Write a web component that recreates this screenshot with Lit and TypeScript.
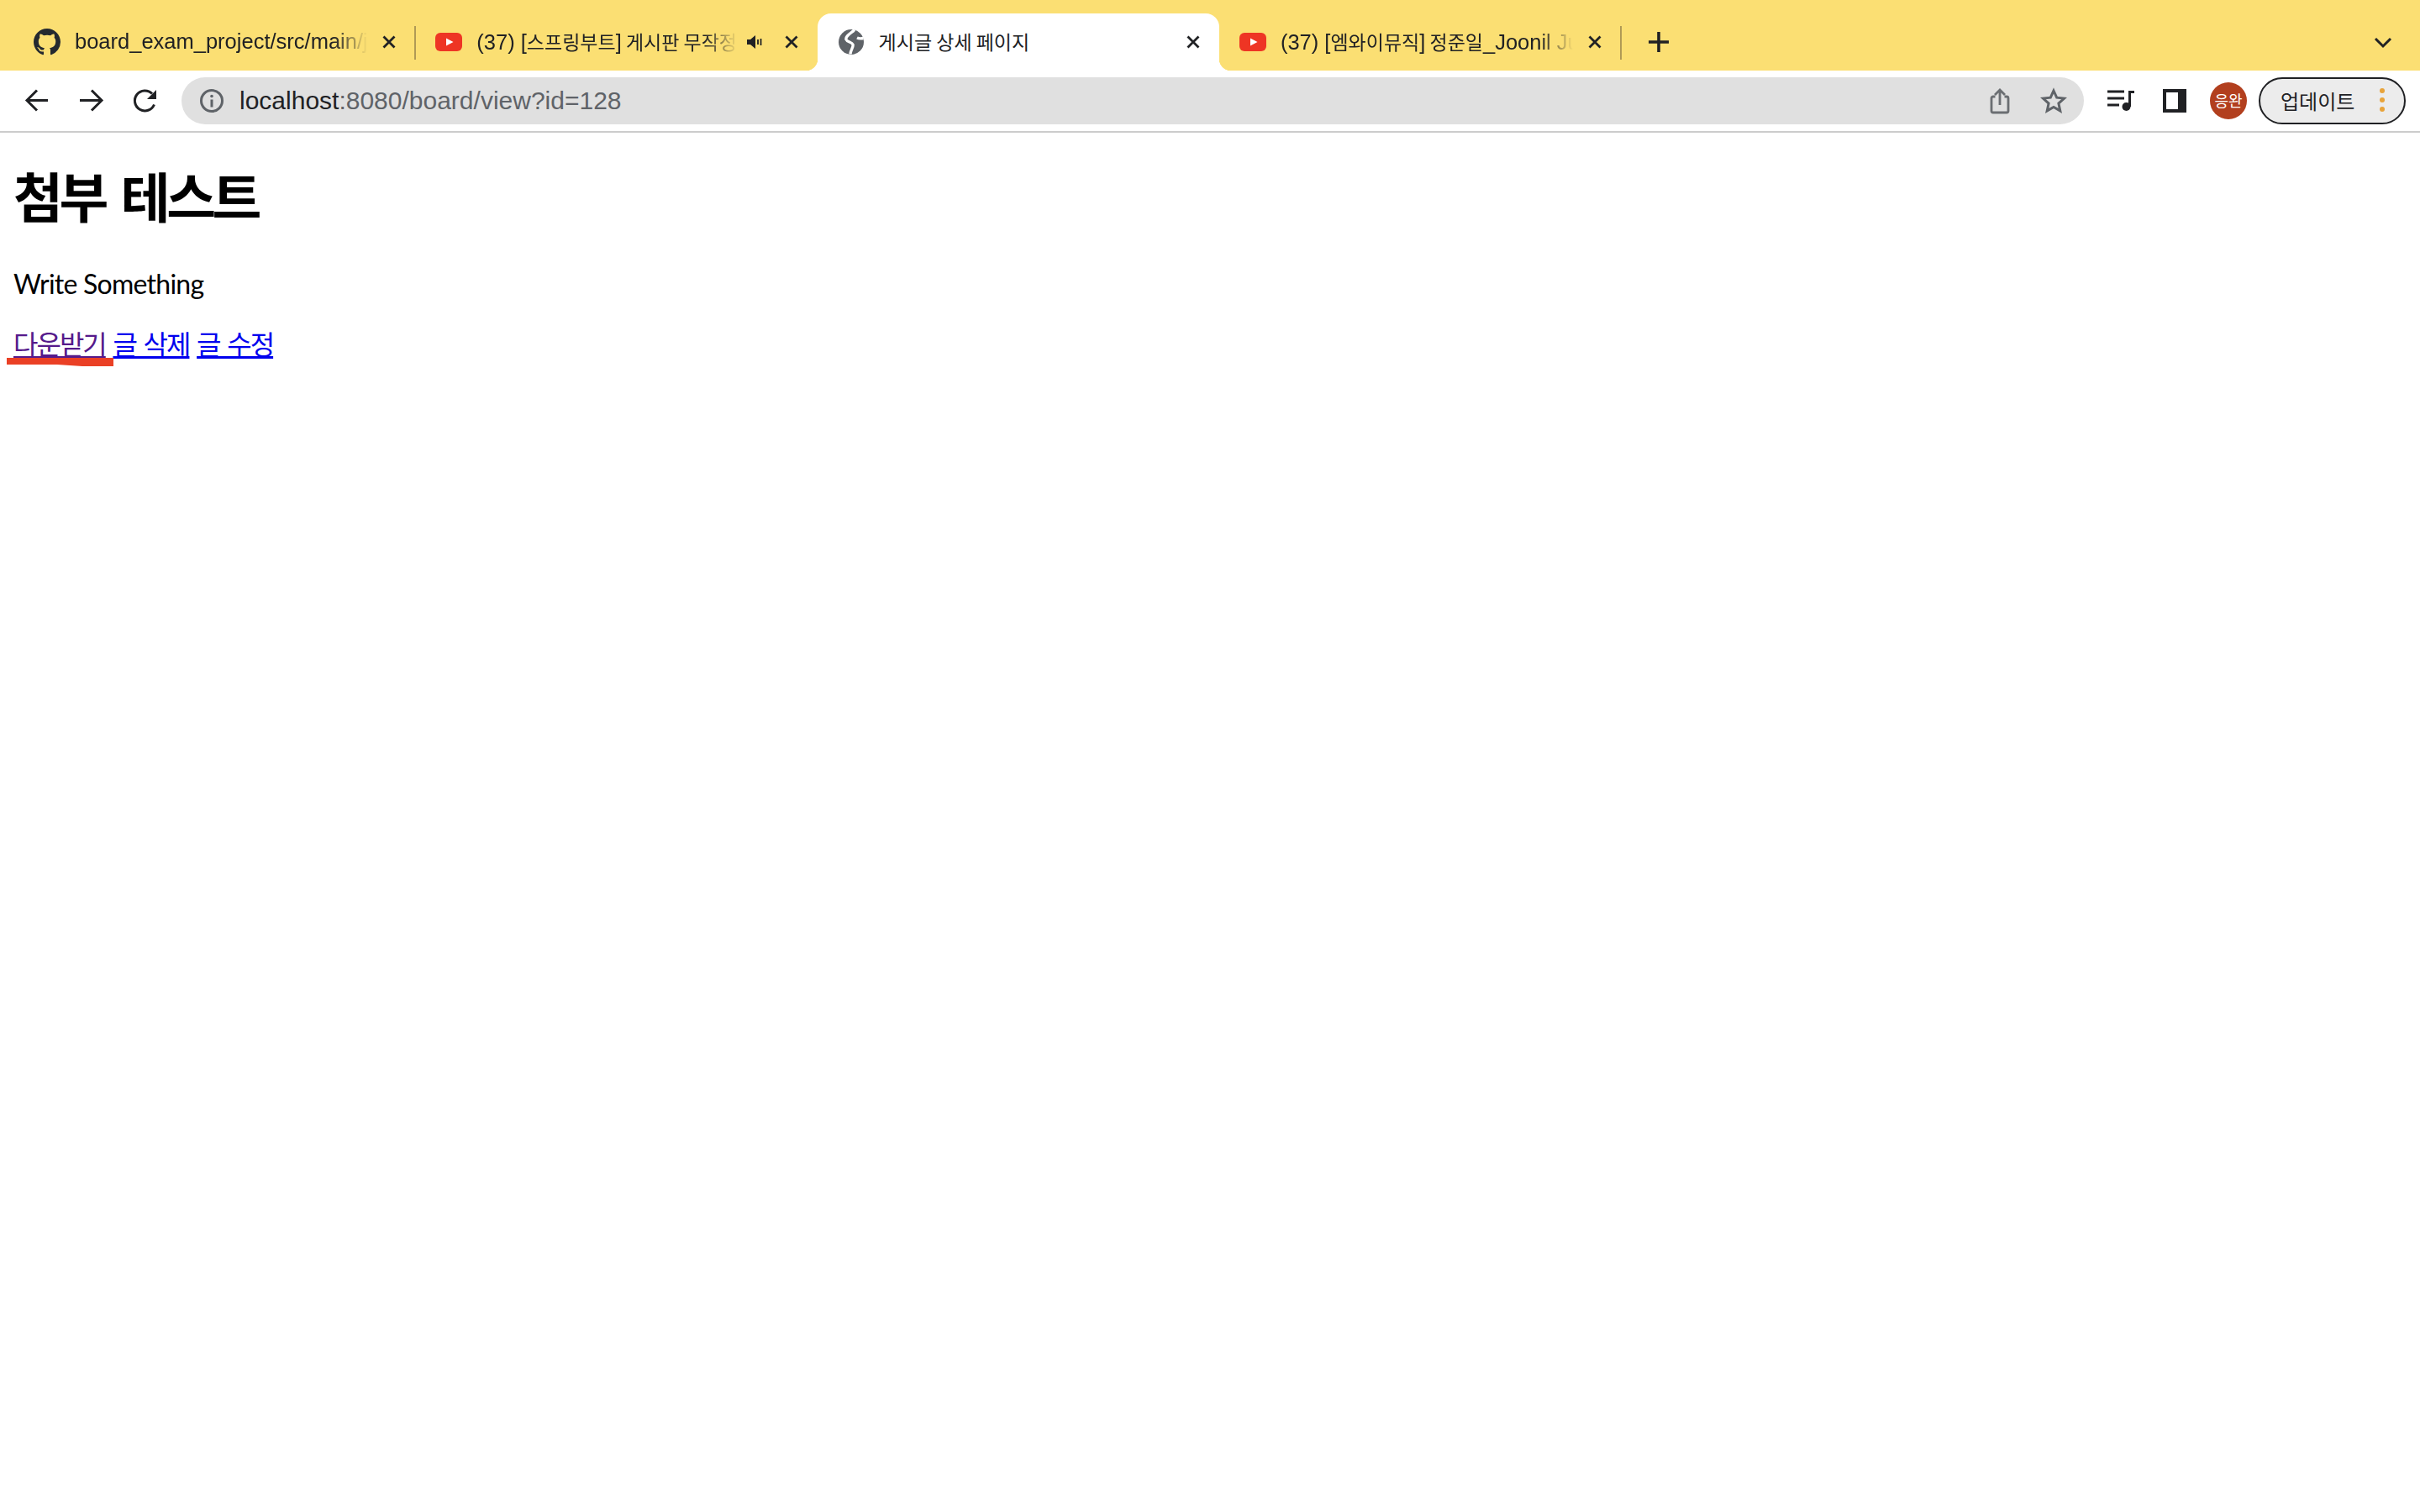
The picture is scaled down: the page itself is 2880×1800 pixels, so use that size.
import { LitElement, html, css } from "lit";
import { customElement } from "lit/decorators.js";

const ghIcon = html`<svg class="fav" viewBox="0 0 16 16"><path fill="#24292f" d="M8 0C3.58 0 0 3.58 0 8c0 3.54 2.29 6.53 5.47 7.59.4.07.55-.17.55-.38 0-.19-.01-.82-.01-1.49-2.01.37-2.53-.49-2.69-.94-.09-.23-.48-.94-.82-1.13-.28-.15-.68-.52-.01-.53.63-.01 1.08.58 1.23.82.72 1.21 1.87.87 2.33.66.07-.52.28-.87.51-1.07-1.78-.2-3.64-.89-3.64-3.95 0-.87.31-1.59.82-2.15-.08-.2-.36-1.02.08-2.12 0 0 .67-.21 2.2.82.64-.18 1.32-.27 2-.27s1.36.09 2 .27c1.53-1.04 2.2-.82 2.2-.82.44 1.1.16 1.92.08 2.12.51.56.82 1.27.82 2.15 0 3.07-1.87 3.75-3.65 3.95.29.25.54.73.54 1.48 0 1.07-.01 1.93-.01 2.2 0 .21.15.46.55.38A8.01 8.01 0 0 0 16 8c0-4.42-3.58-8-8-8z"/></svg>`;
const ytIcon = html`<svg class="fav" viewBox="0 0 32 32"><rect x="0" y="5" width="32" height="22" rx="6" fill="#ee3524"/><path d="M13 11.500 21.500 16 13 20.500z" fill="#fff"/></svg>`;
const globeIcon = html`<svg class="fav" viewBox="0 0 32 32"><circle cx="16" cy="16" r="15" fill="#5f6368"/><path d="M20 1.500C15 6 9 9 10 13c1 3 7 3 8 6 1 3-3 7-3 11.500M23 11c2 1 5 1 7.500 .5" stroke="#fff" stroke-width="3.400" fill="none"/></svg>`;
const closeIcon = html`<svg class="close" viewBox="0 0 32 32"><path d="M9.500 9.500l13 13M22.500 9.500l-13 13" stroke="#202124" stroke-width="2.800" fill="none"/></svg>`;
const speaker = html`<svg class="speaker" viewBox="0 0 24 24"><path fill="#202124" d="M3 9h4l6-5v16l-6-5H3z"/><path d="M16 9v6M19.500 8v8" stroke="#202124" stroke-width="1.800" fill="none"/></svg>`;

@customElement("app-tab")
class AppTab extends LitElement {
  static properties = {
    label: {},
    kind: {},
    active: { type: Boolean },
    sound: { type: Boolean },
    sep: { type: Boolean },
  };
  label = "";
  kind = "";
  active = false;
  sound = false;
  sep = false;
  static styles = css`
    :host { display: block; width: 478.3px; height: 68px; flex: none; position: relative; }
    .tab { height: 68px; display: flex; align-items: center; padding: 0 15px 0 24px; box-sizing: border-box; position: relative; }
    .tab.active { background: #fff; border-radius: 16px 16px 0 0; }
    .tab.active::before, .tab.active::after { content: ""; position: absolute; bottom: 0; width: 14px; height: 14px; }
    .tab.active::before { left: -14px; background: radial-gradient(circle at 0 0, transparent 14px, #fff 14.500px); }
    .tab.active::after { right: -14px; background: radial-gradient(circle at 100% 0, transparent 14px, #fff 14.500px); }
    .icon { width: 32px; height: 32px; flex: none; margin-right: 17px; }
    .fav { width: 32px; height: 32px; display: block; }
    .title {
      flex: 1; min-width: 0; overflow: hidden; white-space: nowrap; padding-bottom: 2px;
      font: 25.500px/34px "Liberation Sans", "Noto Sans CJK KR", sans-serif; color: #202124;
      -webkit-mask-image: linear-gradient(to right, #000 calc(100% - 40px), transparent);
      mask-image: linear-gradient(to right, #000 calc(100% - 40px), transparent);
    }
    .ko { font-family: "Noto Sans CJK KR", sans-serif; font-size: 23px; }
    .active .title { -webkit-mask-image: none; mask-image: none; }
    .speaker { width: 24px; height: 24px; margin: 0 6px 0 8px; flex: none; display: block; }
    .close { width: 32px; height: 32px; margin-left: 10px; flex: none; display: block; }
    .sep { position: absolute; right: -1px; top: 15px; width: 2px; height: 40px; background: #b09a55; }
  `;
  render() {
    const icon = this.kind === "gh" ? ghIcon : this.kind === "yt" ? ytIcon : globeIcon;
    const parts = this.label.split(/([\uac00-\ud7a3 ]*[\uac00-\ud7a3]+)/);
    return html`<div class="tab ${this.active ? "active" : ""}">
        <div class="icon">${icon}</div>
        <div class="title">${parts.map((p, i) => (i % 2 ? html`<span class="ko">${p}</span>` : p))}</div>
        ${this.sound ? speaker : ""}
        ${closeIcon}
      </div>
      ${this.sep ? html`<div class="sep"></div>` : ""}`;
  }
}

@customElement("app-root")
class AppRoot extends LitElement {
  static styles = css`
    :host { display: block; min-height: 1800px; background: #fff; position: relative; }
    .strip { height: 84px; background: #fbdf73; display: flex; align-items: flex-end; padding-left: 16px; box-sizing: border-box; }
    .plus { width: 36px; height: 36px; margin: 0 0 16px 27px; flex: none; }
    .chev { width: 28px; height: 28px; margin: 0 30px 20px auto; flex: none; }
    .toolbar { height: 74px; box-sizing: border-box; border-bottom: 2px solid #ccc; display: flex; align-items: center; padding: 0 17px 0 25px; background: #fff; }
    .nav { width: 36px; height: 36px; flex: none; margin-right: 29px; }
    .nav:nth-child(3) { margin-right: 25px; }
    .url { width: 2264px; height: 56px; flex: none; border-radius: 28px; background: #e0e0e0; display: flex; align-items: center; padding: 0 20px; box-sizing: border-box; }
    .info { width: 32px; height: 32px; flex: none; margin-right: 17px; }
    .addr { flex: 1; font: 30px/36px "Liberation Sans", sans-serif; color: #5f6368; }
    .addr b { font-weight: 400; color: #202124; }
    .share { width: 32px; height: 36px; flex: none; margin-right: 32px; }
    .star { width: 32px; height: 32px; flex: none; }
    .music { width: 36px; height: 36px; flex: none; margin-left: 26px; }
    .panel { width: 28px; height: 28px; flex: none; margin-left: 32px; }
    .avatar { width: 44px; height: 44px; border-radius: 50%; background: #b23f1e; color: #fff; flex: none; margin-left: 28px; display: flex; align-items: center; justify-content: center; box-sizing: border-box; padding-bottom: 2px; font: 18px "Noto Sans CJK KR", sans-serif; }
    .update { width: 175px; height: 56px; margin-left: 14px; flex: none; box-sizing: border-box; border: 2px solid #202124; border-radius: 28px; background: #ececec; display: flex; align-items: center; padding: 0 0 2px 24px; font: 24px "Noto Sans CJK KR", sans-serif; color: #202124; }
    .dots { width: 8px; height: 30px; margin-left: auto; margin-right: 22px; flex: none; }
    main { padding: 0 16px; color: #000; }
    h1 { margin: 27px 0 0; font: 700 64px/92px "Noto Sans CJK KR", sans-serif; letter-spacing: -4.500px; word-spacing: 9px; }
    .body { margin: 39px 0 0; font: 32px/44px "Lato", "Noto Sans CJK KR", sans-serif; letter-spacing: -0.750px; }
    .links { margin: 26px 0 0; font: 32px/44px "Noto Sans CJK KR", sans-serif; position: relative; letter-spacing: -2px; word-spacing: 3.500px; }
    a { color: #0000ee; text-decoration: underline; }
    a.seen { color: #551a8b; }
    .mark { position: absolute; left: -8px; top: 39px; width: 127px; height: 12px; }
  `;
  render() {
    return html`
      <div class="strip">
        <app-tab label="board_exam_project/src/main/j" kind="gh" sep></app-tab>
        <app-tab label="(37) [스프링부트] 게시판 무작정" kind="yt" sound></app-tab>
        <app-tab label="게시글 상세 페이지" kind="globe" active></app-tab>
        <app-tab label="(37) [엠와이뮤직] 정준일_Joonil Ju" kind="yt" sep></app-tab>
        <svg class="plus" viewBox="0 0 36 36"><path d="M18 6v24M6 18h24" stroke="#202124" stroke-width="3.600" fill="none"/></svg>
        <svg class="chev" viewBox="0 0 28 28"><path d="M5 10l9 9 9-9" stroke="#202124" stroke-width="3" fill="none"/></svg>
      </div>
      <div class="toolbar">
        <svg class="nav" viewBox="0 0 36 36"><path d="M32 17.500H8M19 5.500 7 17.500l12 12" stroke="#202124" stroke-width="3" fill="none"/></svg>
        <svg class="nav" viewBox="0 0 36 36"><path d="M5 17.500h24M19 5.500l12 12-12 12" stroke="#202124" stroke-width="3" fill="none"/></svg>
        <svg class="nav" viewBox="0 0 36 36"><path d="M28.500 22.500A12 12 0 1 1 26 9.500" stroke="#202124" stroke-width="3" fill="none"/><path d="M31 5v11H20z" fill="#202124"/></svg>
        <div class="url">
          <svg class="info" viewBox="0 0 32 32"><circle cx="16" cy="16" r="12.500" stroke="#5f6368" stroke-width="3" fill="none"/><path d="M16 14.500v9" stroke="#5f6368" stroke-width="3"/><circle cx="16" cy="10.500" r="1.800" fill="#5f6368"/></svg>
          <div class="addr"><b>localhost</b>:8080/board/view?id=128</div>
          <svg class="share" viewBox="0 0 32 36"><path d="M10.500 13H8a2 2 0 0 0-2 2v15a2 2 0 0 0 2 2h16a2 2 0 0 0 2-2V15a2 2 0 0 0-2-2h-2.500" stroke="#6b6e72" stroke-width="2.800" fill="none"/><path d="M16 23V6M10 11l6-6 6 6" stroke="#6b6e72" stroke-width="2.800" fill="none"/></svg>
          <svg class="star" viewBox="0 0 32 32"><path d="M16 4l3.700 8.200 8.900.9-6.700 6 1.900 8.800L16 23.400l-7.800 4.500 1.900-8.800-6.700-6 8.900-.9z" stroke="#5f6368" stroke-width="3" fill="none"/></svg>
        </div>
        <svg class="music" viewBox="0 0 36 36"><path d="M2 7h20M2 15h20M2 23h14" stroke="#202124" stroke-width="3" fill="none"/><path d="M28 7.500h6M28.500 6v19" stroke="#202124" stroke-width="3" fill="none"/><circle cx="24.500" cy="25" r="5" fill="#202124"/></svg>
        <svg class="panel" viewBox="0 0 28 28"><path fill="#202124" d="M0 0h28v28H0z"/><path fill="#fff" d="M4 4h14v20H4z"/></svg>
        <div class="avatar">응완</div>
        <div class="update">업데이트<svg class="dots" viewBox="0 0 8 30"><circle cx="4" cy="4" r="3" fill="#e8a33a"/><circle cx="4" cy="15" r="3" fill="#e8a33a"/><circle cx="4" cy="26" r="3" fill="#e8a33a"/></svg></div>
      </div>
      <main>
        <h1>첨부 테스트</h1>
        <p class="body">Write Something</p>
        <p class="links">
          <a class="seen" href="#">다운받기</a>
          <a href="#">글 삭제</a>
          <a href="#">글 수정</a>
          <svg class="mark" viewBox="0 0 127 12"><path d="M0 1h127v10H90L60 9H0z" fill="#ea4025"/></svg>
        </p>
      </main>
    `;
  }
}
